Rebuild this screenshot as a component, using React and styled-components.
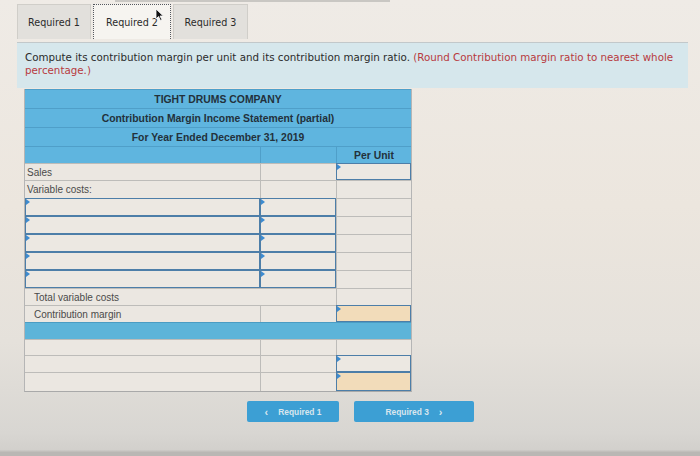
import React from "react";
import styled, { createGlobalStyle } from "styled-components";

const GlobalStyle = createGlobalStyle`
	html, body {
		margin: 0;
		padding: 0;
	}
	body {
		width: 700px;
		height: 456px;
		overflow: hidden;
		background: linear-gradient(180deg, #efebe6 0%, #ece6de 45%, #e5e1db 75%, #d8d6d2 95%, #d2d0cc 98.6%, #b9b7b4 99.2%);
		font-family: "DejaVu Sans", Verdana, sans-serif;
	}
`;

const Page = styled("div")`
	position: relative;
	padding: 3px 12px 0 17px;
`;

const TopLine = styled("div")`
	position: absolute;
	top: 0;
	left: 115px;
	width: 275px;
	height: 2px;
	background-color: #c9c7c3;
`;

const TabRow = styled("div")`
	display: flex;
	height: 35px;
	margin-top: 1px;
`;

const Tab = styled("div")`
	display: flex;
	align-items: center;
	justify-content: center;
	width: ${(p) => p.w}px;
	margin-right: 2px;
	font-size: 9.6px;
	color: #2a2a2a;
	background-color: ${(p) => (p.active ? "#f6f4f0" : "#e2e0dc")};
	border: ${(p) => (p.active ? "1px dotted #55585e" : "1px solid #d0cec9")};
	border-bottom: none;
	box-sizing: border-box;
`;

const Instruction = styled("div")`
	margin-top: 3px;
	height: 46px;
	box-sizing: border-box;
	padding: 8px 8px 0 8px;
	background-color: #d6e7ec;
	border-top: 1px solid #c2c8ca;
	font-size: 10.3px;
	line-height: 13px;
	color: #2b2b2b;
	white-space: nowrap;
`;

const Red = styled("span")`
	color: #b83a3e;
`;

const TableWrap = styled("div")`
	margin: 1px 0 0 7px;
	width: 386px;
	font-family: "Liberation Sans", Arial, sans-serif;
	border-left: 1px solid #b5b5b5;
	border-right: 1px solid #b5b5b5;
	border-bottom: 1px solid #a9a9a9;
`;

const HeadRow = styled("div")`
	display: grid;
	grid-template-columns: ${(p) => (p.split ? "235px 76px 1fr" : "1fr")};
	height: ${(p) => p.h}px;
	background-color: #5fb5df;
	border-top: 1px solid #4f9fc9;
	box-sizing: border-box;
`;

const HeadCell = styled("div")`
	display: flex;
	align-items: center;
	justify-content: center;
	font-size: 10.4px;
	font-weight: bold;
	color: #23313b;
	border-left: ${(p) => (p.divider ? "1px solid #4f9fc9" : "none")};
`;

const Row = styled("div")`
	display: grid;
	grid-template-columns: ${(p) => (p.merge ? "311px 1fr" : "235px 76px 1fr")};
	height: ${(p) => p.h}px;
	border-top: 1px solid #bdbcb9;
	box-sizing: border-box;
	background-color: #ebe7e1;
`;

const BlueRow = styled("div")`
	height: ${(p) => p.h}px;
	background-color: #5db4d9;
	border-top: 1px solid #4a9cc3;
	box-sizing: border-box;
`;

const Cell = styled("div")`
	display: flex;
	align-items: center;
	padding-left: ${(p) => p.indent || 2}px;
	font-size: 10px;
	color: #4a4a4a;
	border-left: ${(p) => (p.first ? "none" : "1px solid #bdbcb9")};
	box-sizing: border-box;
`;

const InputCell = styled("div")`
	position: relative;
	margin: -1px 0 0 0;
	border: 1.5px solid #4d7ea8;
	background-color: ${(p) => (p.tan ? "#f2dcba" : "#ece8e2")};
	box-sizing: border-box;

	&::before {
		content: "";
		position: absolute;
		top: 0;
		left: 0;
		border-top: 3px solid transparent;
		border-bottom: 3px solid transparent;
		border-left: 4px solid #3d8bd0;
	}
`;

const ButtonRow = styled("div")`
	display: flex;
	gap: 15px;
	margin: 9px 0 0 230px;
`;

const NavButton = styled("div")`
	display: flex;
	align-items: center;
	justify-content: center;
	gap: 10px;
	width: ${(p) => p.w}px;
	height: 21px;
	border-radius: 2px;
	background-color: #3c9fd4;
	font-family: "Liberation Sans", Arial, sans-serif;
	font-size: 8.4px;
	font-weight: bold;
	color: #d9e6ee;
`;

const Chevron = styled("span")`
	font-size: 11px;
	font-weight: bold;
`;

const Cursor = styled("svg")`
	position: absolute;
	top: 8px;
	left: 155px;
`;

const inputRows = [0, 1, 2, 3, 4];

const App = () => {
	return (
		<Page>
			<GlobalStyle />
			<TopLine />
			<TabRow>
				<Tab w={74}>Required 1</Tab>
				<Tab w={78} active>Required 2</Tab>
				<Tab w={75}>Required 3</Tab>
			</TabRow>
			<Cursor width="9" height="13" viewBox="0 0 9 13">
				<path d="M1 1 L1 11 L3.5 8.5 L5.5 12.5 L7 11.8 L5 8 L8.3 8 Z" fill="#111" stroke="#fff" strokeWidth="0.8" />
			</Cursor>
			<Instruction>
				Compute its contribution margin per unit and its contribution margin ratio.{" "}
				<Red>(Round Contribution margin ratio to nearest whole</Red>
				<br />
				<Red>percentage.)</Red>
			</Instruction>
			<TableWrap>
				<HeadRow h={19}>
					<HeadCell>TIGHT DRUMS COMPANY</HeadCell>
				</HeadRow>
				<HeadRow h={19}>
					<HeadCell>Contribution Margin Income Statement (partial)</HeadCell>
				</HeadRow>
				<HeadRow h={19}>
					<HeadCell>For Year Ended December 31, 2019</HeadCell>
				</HeadRow>
				<HeadRow h={17} split>
					<HeadCell />
					<HeadCell divider />
					<HeadCell divider>Per Unit</HeadCell>
				</HeadRow>
				<Row h={17}>
					<Cell first>Sales</Cell>
					<Cell />
					<InputCell />
				</Row>
				<Row h={18}>
					<Cell first>Variable costs:</Cell>
					<Cell />
					<Cell />
				</Row>
				{inputRows.map((i) => (
					<Row h={18} key={i}>
						<InputCell />
						<InputCell />
						<Cell />
					</Row>
				))}
				<Row h={17} merge>
					<Cell first indent={9}>Total variable costs</Cell>
					<Cell />
				</Row>
				<Row h={17}>
					<Cell first indent={9}>Contribution margin</Cell>
					<Cell />
					<InputCell tan />
				</Row>
				<BlueRow h={17} />
				<Row h={16}>
					<Cell first />
					<Cell />
					<Cell />
				</Row>
				<Row h={17}>
					<Cell first />
					<Cell />
					<InputCell />
				</Row>
				<Row h={19}>
					<Cell first />
					<Cell />
					<InputCell tan />
				</Row>
			</TableWrap>
			<ButtonRow>
				<NavButton w={92}>
					<Chevron>‹</Chevron>
					<span>Required 1</span>
				</NavButton>
				<NavButton w={120}>
					<span>Required 3</span>
					<Chevron>›</Chevron>
				</NavButton>
			</ButtonRow>
		</Page>
	);
};

export default App;
